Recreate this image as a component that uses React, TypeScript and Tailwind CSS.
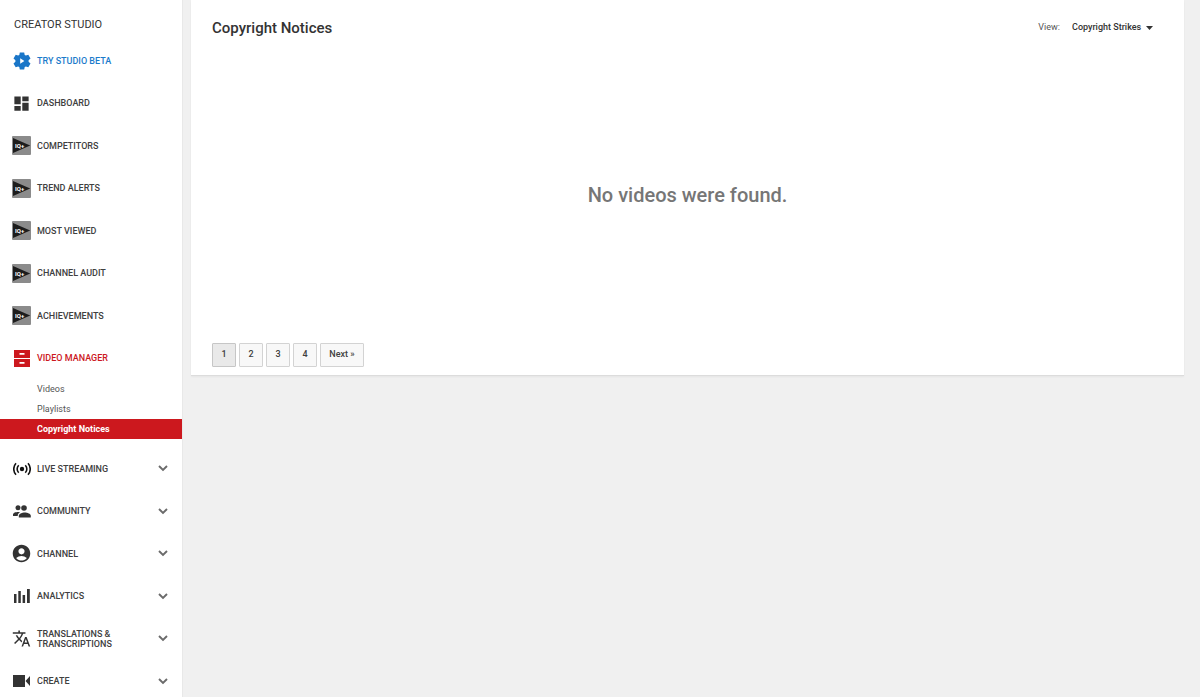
import { useState } from "react";
import type { ReactNode } from "react";
import { MdDashboard, MdAccountCircle, MdTranslate } from "react-icons/md";

type MenuItem = {
    label: string;
    icon: ReactNode;
    expandable?: boolean;
    color?: string;
};

const BetaIcon = () => (
    <svg viewBox="0 0 18 18" className="w-[18px] h-[18px]">
        <path
            fill="#1a76c8"
            d="M6.8 0.4h4.4l.5 2.5 1.2.7 2.4-.8 2.2 3.8-1.9 1.7v1.4l1.9 1.7-2.2 3.8-2.4-.8-1.2.7-.5 2.5H6.8l-.5-2.5-1.2-.7-2.4.8L.5 11.4l1.9-1.7V8.3L.5 6.6l2.2-3.8 2.4.8 1.2-.7z"
        />
        <path fill="#fff" d="M7.2 6.3l4.2 2.700-4.2 2.700z" />
    </svg>
);

const IqIcon = () => (
    <svg viewBox="0 0 19 19" className="w-[19px] h-[19px]">
        <rect width="19" height="19" rx="1" fill="#8b8b8b" />
        <path d="M1 2L18.200 9.500 1 17z" fill="#1c1c1c" />
        <text x="3" y="11.700" fontSize="6" fontWeight="700" fill="#fff" className="font-[Roboto,sans-serif]">IQ+</text>
    </svg>
);

const DrawerIcon = () => (
    <svg viewBox="0 0 16 17" className="w-4 h-[17px]" fill="#cc181e">
        <path fillRule="evenodd" d="M0 0h16v8H0zM5.500 3v1.800h5V3z" />
        <path fillRule="evenodd" d="M0 9h16v8H0zM5.500 12v1.800h5V12z" />
    </svg>
);

const LiveIcon = () => (
    <svg viewBox="0 0 18 14" className="w-[18px] h-[14px]" fill="none" stroke="#111" strokeWidth="1.6">
        <circle cx="9" cy="7" r="2.2" fill="#111" stroke="none" />
        <path d="M5.700 3.300a5.200 5.200 0 0 0 0 7.400M12.300 3.300a5.200 5.200 0 0 1 0 7.400M3 1.200a8.600 8.600 0 0 0 0 11.600M15 1.200a8.600 8.600 0 0 1 0 11.600" />
    </svg>
);

const PeopleIcon = () => (
    <svg viewBox="0 0 18 13" className="w-[18px] h-[13px]" fill="#333">
        <circle cx="5" cy="2.800" r="2.500" />
        <circle cx="11" cy="3" r="2.800" />
        <path d="M0 11V9.500C0 7.800 2.800 7 5.200 7c.6 0 1.200 0 1.800.2C5.600 8 4.700 9.200 4.700 11z" />
        <path d="M5.800 12.500v-1.700c0-2 3.400-3.300 6-3.300s6 1.300 6 3.300v1.700z" />
    </svg>
);

const BarsIcon = () => (
    <svg viewBox="0 0 16 14" className="w-4 h-[14px]" fill="#333">
        <path d="M0 5h2.500v9H0zM4.300 2h2.500v12H4.300zM8.600 6h2.500v8H8.600zM13 0h2.800v14H13z" />
    </svg>
);

const CameraIcon = () => (
    <svg viewBox="0 0 17 12" className="w-[17px] h-3" fill="#333">
        <path d="M0 0h12v12H0zM12.500 6L17 1v10z" />
    </svg>
);

const Chevron = () => (
    <svg viewBox="0 0 10 7" className="w-[10px] h-[7px] shrink-0" fill="none" stroke="#6b6b6b" strokeWidth="1.9">
        <path d="M1 1l4 4 4-4" />
    </svg>
);

const mainItems: MenuItem[] = [
    { label: "TRY STUDIO BETA", icon: <BetaIcon />, color: "text-[#1b7bcb]" },
    { label: "DASHBOARD", icon: <MdDashboard size={19} /> },
    { label: "COMPETITORS", icon: <IqIcon /> },
    { label: "TREND ALERTS", icon: <IqIcon /> },
    { label: "MOST VIEWED", icon: <IqIcon /> },
    { label: "CHANNEL AUDIT", icon: <IqIcon /> },
    { label: "ACHIEVEMENTS", icon: <IqIcon /> },
    { label: "VIDEO MANAGER", icon: <DrawerIcon />, color: "text-[#cc181e]" },
];

const moreItems: MenuItem[] = [
    { label: "LIVE STREAMING", icon: <LiveIcon />, expandable: true },
    { label: "COMMUNITY", icon: <PeopleIcon />, expandable: true },
    { label: "CHANNEL", icon: <MdAccountCircle size={21} />, expandable: true },
    { label: "ANALYTICS", icon: <BarsIcon />, expandable: true },
    { label: "TRANSLATIONS & TRANSCRIPTIONS", icon: <MdTranslate size={19} />, expandable: true },
    { label: "CREATE", icon: <CameraIcon />, expandable: true },
];

const subItems = ["Videos", "Playlists", "Copyright Notices"];

const MenuList = ({ items }: { items: MenuItem[] }) => (
    <ul>
        {items.map((item) => (
            <li key={item.label} className="odd:h-[43px] even:h-[42px]">
                <a href="#" className={`flex h-full items-center pl-3 pr-[14px] text-[9px] font-medium leading-[10px] ${item.color ?? "text-[#404040]"}`}>
                    <span className="flex w-[19px] shrink-0 justify-center text-[#333] [&>svg]:shrink-0">{item.icon}</span>
                    <span className="ml-[6px] w-24">{item.label}</span>
                    {item.expandable && (
                        <span className="ml-auto">
                            <Chevron />
                        </span>
                    )}
                </a>
            </li>
        ))}
    </ul>
);

const Sidebar = () => (
    <aside className="w-[183px] shrink-0 overflow-hidden border-r border-[#e8e8e8] bg-white">
        <h2 className="h-[39px] pl-[14px] pt-[17px] text-[11px] leading-4 text-[#333]">CREATOR STUDIO</h2>
        <nav>
            <MenuList items={mainItems} />
            <ul className="mb-2">
                {subItems.map((name) => (
                    <li key={name}>
                        <a
                            href="#"
                            className={`block h-5 pl-[37px] text-[9px] leading-5 ${
                                name === "Copyright Notices" ? "bg-[#cc181e] font-bold text-white" : "text-[#555]"
                            }`}
                        >
                            {name}
                        </a>
                    </li>
                ))}
            </ul>
            <MenuList items={moreItems} />
        </nav>
    </aside>
);

const App = () => {
    const [page, setPage] = useState(1);

    return (
        <div className="flex h-screen overflow-hidden bg-[#f0f0f0] font-[Roboto,sans-serif]">
            <Sidebar />
            <main className="flex-1 pl-2 pr-4">
                <section className="border-b border-[#dcdcdc] bg-white px-[21px] pb-2 shadow-xs">
                    <header className="flex items-center justify-between pt-4 pr-[10px]">
                        <h1 className="text-[15px] font-medium leading-6 text-[#333]">Copyright Notices</h1>
                        <div className="flex items-center text-[9px] text-[#333]">
                            <label htmlFor="view" className="mr-3 text-[#555]">View:</label>
                            <div className="flex items-center">
                                <select id="view" className="appearance-none bg-transparent font-medium">
                                    <option>Copyright Strikes</option>
                                    <option>Takedowns</option>
                                </select>
                                <svg viewBox="0 0 7 4" className="ml-1 h-1 w-[7px]" fill="#333">
                                    <path d="M0 0h7L3.500 4z" />
                                </svg>
                            </div>
                        </div>
                    </header>

                    <p className="pt-[139px] pb-[132px] text-center text-[20px] font-medium leading-8 text-[#767676]">No videos were found.</p>

                    <div className="flex gap-[3px] text-[9px] font-medium text-[#404040]">
                        {[1, 2, 3, 4].map((n) => (
                            <button
                                key={n}
                                onClick={() => setPage(n)}
                                className={`h-6 w-6 rounded-[1px] border ${n === page ? "border-[#c6c6c6] bg-[#e9e9e9]" : "border-[#d3d3d3] bg-[#f8f8f8]"}`}
                            >
                                {n}
                            </button>
                        ))}
                        <button
                            onClick={() => setPage(Math.min(page + 1, 4))}
                            className="h-6 w-11 rounded-[1px] border border-[#d3d3d3] bg-[#f8f8f8]"
                        >
                            Next »
                        </button>
                    </div>
                </section>
            </main>
        </div>
    );
};

export default App;
